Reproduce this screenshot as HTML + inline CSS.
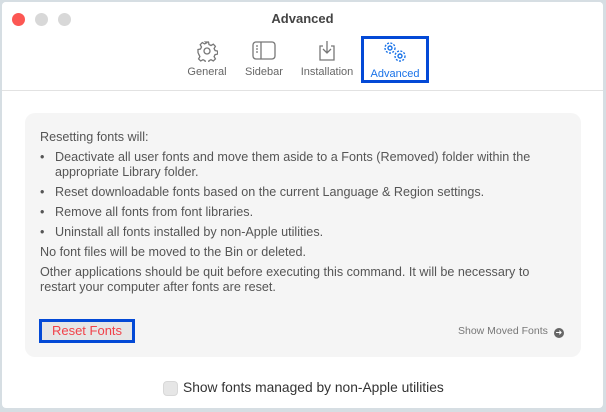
<!DOCTYPE html>
<html><head><style>
*{margin:0;padding:0;box-sizing:border-box}
body{width:606px;height:412px;background:#d6dee3;font-family:"Liberation Sans",sans-serif;position:relative;overflow:hidden}
.win{position:absolute;left:2px;top:2px;width:601px;height:406px;background:#fff;border-radius:4px;overflow:hidden}
.hdr{position:absolute;left:0;top:0;width:100%;height:89px;border-bottom:1px solid #e2e2e2;background:#fff}
.dot{position:absolute;top:11px;width:13px;height:13px;border-radius:50%;background:#d8d8d8}
.title{position:absolute;top:9px;left:0;width:100%;text-align:center;font-size:13px;font-weight:bold;color:#444}
.tab{position:absolute;top:38px;font-size:11px;color:#666;text-align:center}
.tab svg{display:block;margin:0 auto 4px}
.box{position:absolute;left:23px;top:111px;width:556px;height:244px;background:#f5f5f5;border-radius:10px;font-size:12.6px;color:#555}
.t{position:absolute;left:15px;white-space:nowrap}
.b{position:absolute;left:15px}
</style></head><body>
<div class="win">
<div class="hdr">
<div class="dot" style="left:10px;background:#fc5753"></div>
<div class="dot" style="left:33px"></div>
<div class="dot" style="left:56px"></div>
<div class="title">Advanced</div>
<div class="tab" style="left:183px;width:44px"><svg width="22" height="22" viewBox="0 0 22 22" fill="none" stroke="#777" stroke-width="1.3"><path d="M9.5 2h3l.5 2.5 2 1 2.3-1.3 2.1 2.1-1.3 2.3 1 2 2.5.5v3l-2.5.5-1 2 1.3 2.3-2.1 2.1-2.3-1.3-2 1-.5 2.5h-3l-.5-2.5-2-1-2.3 1.3-2.1-2.1 1.3-2.3-1-2L2 12.5v-3l2.5-.5 1-2-1.3-2.3 2.1-2.1 2.3 1.3 2-1z"/><circle cx="11" cy="11" r="3"/></svg>General</div>
<div class="tab" style="left:240px;width:44px"><svg width="24" height="22" viewBox="0 0 24 22" fill="none" stroke="#777" stroke-width="1.3"><rect x="1" y="2" width="22" height="17" rx="3"/><path d="M9 2v17M4 6h2M4 9h2M4 12h2"/></svg>Sidebar</div>
<div class="tab" style="left:294px;width:62px"><svg width="20" height="22" viewBox="0 0 20 22" fill="none" stroke="#777" stroke-width="1.3"><path d="M6 6H3v14h14V6h-3M10 1v12M6 9l4 4 4-4"/></svg>Installation</div>
<div class="tab" style="left:359px;top:34px;width:68px;height:47px;border:3px solid #0349d6;color:#1a73e8;padding-top:1px"><svg width="28" height="24" viewBox="0 0 28 24" fill="none" stroke="#1a73e8" stroke-width="1.4"><circle cx="9" cy="8" r="5" stroke-dasharray="2 1.4"/><circle cx="9" cy="8" r="2"/><circle cx="19" cy="16" r="5" stroke-dasharray="2 1.4"/><circle cx="19" cy="16" r="2"/></svg>Advanced</div>
</div>
<div class="box">
<div class="t" style="top:17px">Resetting fonts will:</div>
<div class="b" style="top:37px">•</div><div class="t" style="left:30px;top:37px">Deactivate all user fonts and move them aside to a Fonts (Removed) folder within the</div>
<div class="t" style="left:30px;top:52px">appropriate Library folder.</div>
<div class="b" style="top:72px">•</div><div class="t" style="left:30px;top:72px">Reset downloadable fonts based on the current Language &amp; Region settings.</div>
<div class="b" style="top:92px">•</div><div class="t" style="left:30px;top:92px">Remove all fonts from font libraries.</div>
<div class="b" style="top:112px">•</div><div class="t" style="left:30px;top:112px">Uninstall all fonts installed by non-Apple utilities.</div>
<div class="t" style="top:132px">No font files will be moved to the Bin or deleted.</div>
<div class="t" style="top:152px">Other applications should be quit before executing this command. It will be necessary to</div>
<div class="t" style="top:167px">restart your computer after fonts are reset.</div>
<div style="position:absolute;left:14px;top:206px;width:96px;height:24px;border:3px solid #0349d6;background:#e6e6e6;color:#f0424a;font-size:13px;text-align:center;line-height:18px">Reset Fonts</div>
<div style="position:absolute;left:433px;top:212px;font-size:10.5px;color:#777">Show Moved Fonts <span style="display:inline-block;width:10px;height:10px;border-radius:50%;background:#666;color:#fff;font-size:8px;line-height:10px;text-align:center;vertical-align:-1px;margin-left:3px">➜</span></div>
</div>
<div style="position:absolute;left:161px;top:379px;width:15px;height:15px;border-radius:4px;background:#e6e6e6;border:1px solid #d8d8d8"></div>
<div style="position:absolute;left:181px;top:378px;font-size:13.8px;color:#333">Show fonts managed by non-Apple utilities</div>
</div>
</body></html>
